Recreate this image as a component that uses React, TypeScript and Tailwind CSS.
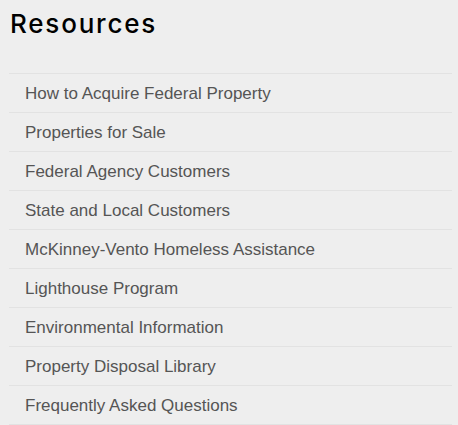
const links = [
  "How to Acquire Federal Property",
  "Properties for Sale",
  "Federal Agency Customers",
  "State and Local Customers",
  "McKinney-Vento Homeless Assistance",
  "Lighthouse Program",
  "Environmental Information",
  "Property Disposal Library",
  "Frequently Asked Questions",
];

export default function App() {
  return (
    <div className="w-[458px] h-[425px] bg-[#eeeeee] overflow-hidden">
      <h2 className="pl-[10px] pt-[8px] text-[26px] leading-[32px] font-medium tracking-[1.8px] text-black font-['Inter',sans-serif]">
        Resources
      </h2>
      <ul className="ml-[9px] w-[443px] mt-[33px] border-t border-[#e2e2e2]">
        {links.map((l) => (
          <li
            key={l}
            className="h-[39px] border-b border-[#e2e2e2] pl-[16px] pt-px flex items-center text-[17px] text-[#555555] font-['Liberation_Sans',Arial,sans-serif]"
          >
            {l}
          </li>
        ))}
      </ul>
    </div>
  );
}
